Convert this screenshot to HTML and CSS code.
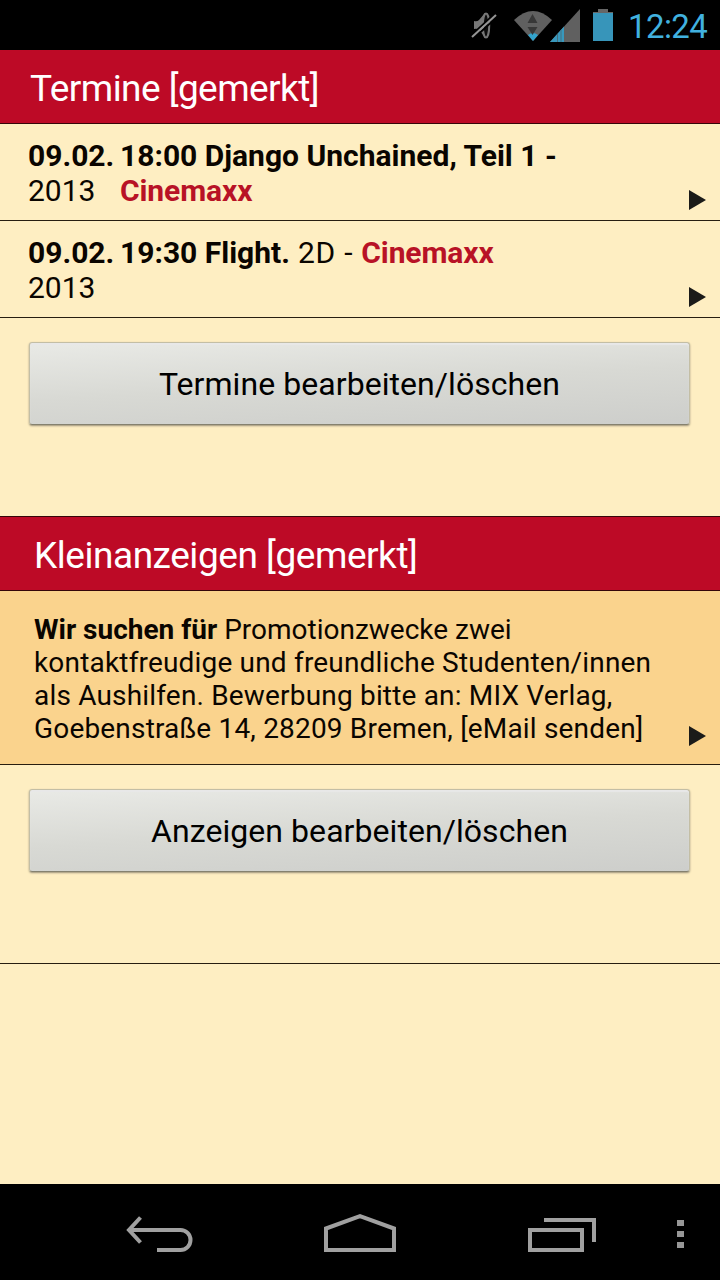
FILE: index.html
```html
<!DOCTYPE html>
<html lang="de">
<head>
<title>Gemerkt</title>
<meta charset="utf-8">
<link rel="stylesheet" href="styles.css">
</head>
<body>
    <div class="statusbar">
        <svg class="mute" width="26" height="28" viewBox="0 0 26 28">
            <path d="M3 9q3 1 5-1l6-7v24l-6-7q-2-2-5-1z" fill="#777"/>
            <ellipse cx="15" cy="13.500" rx="3.200" ry="12" fill="#0c0c0c" stroke="#777" stroke-width="2"/>
            <path d="M0 23.500L24 1.500M2 27L26 5" stroke="#000" stroke-width="2"/>
            <path d="M1 25L25 3" stroke="#959595" stroke-width="2"/>
        </svg>
        <svg class="wifi" width="40" height="32" viewBox="0 0 40 32">
            <path d="M1 10Q20-8 39 10L20 31z" fill="#606060"/>
            <path d="M15 25q5-4 10 0l-5 6z" fill="#33a3cc"/>
            <path d="M14.500 13l5-9 5 9zM14.500 17h10l-5 8z" fill="#383838"/>
        </svg>
        <svg class="signal" width="30" height="33" viewBox="0 0 30 33">
            <path d="M0 33L30 0v33z" fill="#606060"/>
            <path d="M0 33L14 17.500V33z" fill="#3898bd"/>
            <path d="M7.500 25v8M11 21v12" stroke="#456e7e"/>
        </svg>
        <svg class="battery" width="20" height="32" viewBox="0 0 20 32">
            <path d="M5 0h10v3h5v4H0V3h5z" fill="#666"/>
            <path d="M0 4h20v28H0z" fill="#3795ba"/>
        </svg>
        <span class="clock">12:24</span>
    </div>

    <div class="content">
        <h2 class="titel termine">Termine [gemerkt]</h2>
        <div class="termin">
            <div class="datum"><b>09.02.</b><br>2013</div>
            <div class="info"><b>18:00 Django Unchained, Teil 1 -</b><br><b class="ort">Cinemaxx</b></div>
            <span class="pfeil"></span>
        </div>
        <div class="termin">
            <div class="datum"><b>09.02.</b><br>2013</div>
            <div class="info"><b>19:30 Flight.</b><span class="zusatz"> 2D - </span><b class="ort">Cinemaxx</b></div>
            <span class="pfeil"></span>
        </div>
        <div class="aktion">
            <button type="button">Termine bearbeiten/löschen</button>
        </div>

        <h2 class="titel anzeigen">Kleinanzeigen [gemerkt]</h2>
        <div class="anzeige">
            <p><b>Wir suchen für</b> Promotionzwecke zwei<br>
            <span class="text">kontaktfreudige und freundliche Studenten/innen<br>
            als Aushilfen. Bewerbung bitte an: MIX Verlag,<br>
            Goebenstraße 14, 28209 Bremen, [eMail senden]</span></p>
            <span class="pfeil"></span>
        </div>
        <div class="aktion ende">
            <button type="button">Anzeigen bearbeiten/löschen</button>
        </div>
    </div>

    <div class="navbar">
        <svg class="back" width="68" height="38" viewBox="0 0 68 38" fill="none" stroke="#a0a0a0" stroke-width="4">
            <path d="M14.500 1.500L3 14l11.500 12.500M4 14h50.500a10 10 0 0 1 0 20H31"/>
        </svg>
        <svg class="home" width="72" height="38" viewBox="0 0 72 38" fill="none" stroke="#a0a0a0" stroke-width="4">
            <path d="M2 36V14.500L36 2.200l34 12.300V36z"/>
        </svg>
        <svg class="recent" width="68" height="34" viewBox="0 0 68 34" fill="none" stroke="#a0a0a0" stroke-width="4">
            <path d="M2 12h52v20H2zM16 2h50v22"/>
        </svg>
        <svg class="more" width="7" height="28" viewBox="0 0 7 28">
            <path d="M0 0h7v6H0zM0 11h7v6H0zM0 22h7v6H0z" fill="#979797"/>
        </svg>
    </div>
</body>
</html>
```

FILE: styles.css
```css
* {box-sizing: border-box;}
body {margin: 0; width: 720px; height: 1280px; overflow: hidden; display: flex; flex-direction: column; background-color: #feeec2; color: #0a0500; font-family: Roboto, "Liberation Sans", sans-serif;}

.statusbar {height: 50px; flex: none; display: flex; justify-content: flex-end; align-items: flex-start; padding-right: 12px; background-color: #000;}
.mute {margin: 12px 16px 0 0;}
.wifi {margin-top: 10px;}
.signal {margin: 9px 13px 0 -3px;}
.battery {margin: 9px 15px 0 0;}
.clock {width: 80px; line-height: 53px; font-size: 33px; letter-spacing: -.6px; white-space: nowrap; color: #41b1df;}

.content {flex: 1;}
.titel {margin: 0; height: 74px; line-height: 78px; border-bottom: 1px solid #350609; background-color: #bd0a26; color: #fff; font-size: 37px; font-weight: normal; letter-spacing: -.5px; white-space: nowrap;}
.termine {padding-left: 30px; letter-spacing: -.56px;}
.anzeigen {height: 75px; padding-left: 34px; border-top: 1px solid #350609; letter-spacing: -.46px;}

.termin {display: flex; height: 97px; padding: 14px 14px 0 28px; border-bottom: 1px solid #271d10; font-size: 30px; line-height: 35px; white-space: nowrap;}
.datum {width: 92px;}
.info {flex: 1;}
.ort {color: #b81226; letter-spacing: -.1px;}
.zusatz {letter-spacing: .7px;}
.pfeil {align-self: flex-end; width: 0; height: 0; margin-bottom: 10px; border-left: 17px solid #1b1b19; border-top: 10px solid transparent; border-bottom: 10px solid transparent;}

.aktion {height: 198px; padding: 24px 29px 0;}
.aktion button {display: block; width: 661px; height: 83px; padding: 1px 0 0; border: 1px solid #c3bea5; border-bottom: 1px solid #85816f; border-radius: 3px; background: linear-gradient(177deg, #e9eae6, #d8d9d4 50%, #cdcecb); box-shadow: inset 0 2px 1px #e8e8e8, 0 1px 2px #9c927a; color: #000; font-family: inherit; font-size: 32px; letter-spacing: .06px;}
.ende {height: 199px; border-bottom: 1px solid #271d10;}

.anzeige {display: flex; justify-content: space-between; height: 174px; padding: 22px 14px 0 34px; border-bottom: 1px solid #271d10; background-color: #fad38d; font-size: 28px; line-height: 33px; white-space: nowrap;}
.anzeige p {margin: 0;}
.anzeige .text {letter-spacing: .18px;}
.anzeige .pfeil {margin-bottom: 18px;}

.navbar {height: 96px; flex: none; display: flex; align-items: flex-start; background-color: #000;}
.back {margin: 32px 0 0 126px;}
.home {margin: 30px 0 0 130px;}
.recent {margin: 34px 0 0 132px;}
.more {margin: 36px 0 0 81px;}
```
